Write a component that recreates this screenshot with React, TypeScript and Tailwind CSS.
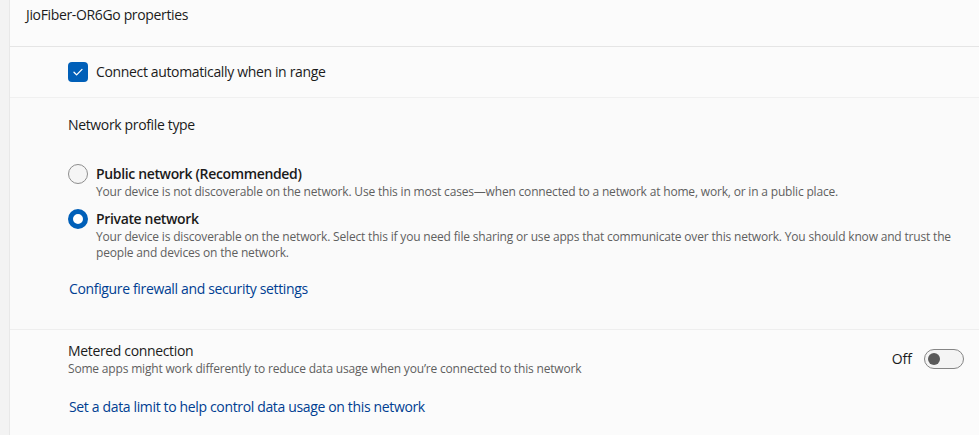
import React, { useState } from 'react';

const font = { fontFamily: '"Segoe UI", "Open Sans", "Liberation Sans", sans-serif' };

function Radio({ checked }: { checked: boolean }) {
  return checked ? (
    <span className="box-border block h-5 w-5 shrink-0 rounded-full border-[5px] border-[#005fb8] bg-white" />
  ) : (
    <span className="box-border block h-5 w-5 shrink-0 rounded-full border border-[#8d8d8d] bg-[#f5f5f5]" />
  );
}

export default function App() {
  const [auto, setAuto] = useState(true);
  const [profile, setProfile] = useState<'public' | 'private'>('private');
  const [metered, setMetered] = useState(false);

  return (
    <div className="flex h-[435px] w-[979px] overflow-hidden bg-[#f3f3f3] text-[#1b1b1b]" style={font}>
      <div className="w-[10px] shrink-0 border-r border-[#e8e8e8] bg-[#f3f3f3]" />
      <div className="flex flex-1 flex-col bg-[#fbfbfb]">
        <div className="h-[47px] shrink-0 border-b border-[#e5e5e5] pl-[16px] pt-[5px] text-[14px] leading-[20px] tracking-[-0.35px]">
          JioFiber-OR6Go properties
        </div>

        <div className="flex h-[51px] shrink-0 items-center border-b border-[#f0f0f0] pl-[58px]">
          <button className="flex items-center gap-2" onClick={() => setAuto(!auto)}>
            <span className="flex h-5 w-5 items-center justify-center rounded-[4px] bg-[#005fb8]">
              {auto && (
                <svg width="12" height="12" viewBox="0 0 12 12" fill="none">
                  <path d="M2 6.3l2.6 2.6L10 3.4" stroke="white" strokeWidth="1.3" strokeLinecap="round" strokeLinejoin="round" />
                </svg>
              )}
            </span>
            <span className="text-[14px] leading-[20px] tracking-[-0.35px]">Connect automatically when in range</span>
          </button>
        </div>

        <div className="h-[232px] shrink-0 border-b border-[#eeeeee] bg-[#fafafa] pl-[58px] pt-[17px]">
          <div className="text-[14px] leading-[20px] tracking-[-0.35px]">Network profile type</div>

          <div className="mt-[29px] flex cursor-pointer gap-2" onClick={() => setProfile('public')}>
            <Radio checked={profile === 'public'} />
            <div>
              <div className="text-[14px] font-semibold leading-[20px] tracking-[-0.35px]">Public network (Recommended)</div>
              <div className="text-[12px] leading-[16px] tracking-[-0.18px] text-[#5f5f5f]">
                Your device is not discoverable on the network. Use this in most cases—when connected to a network at home, work, or in a public place.
              </div>
            </div>
          </div>

          <div className="mt-[9px] flex cursor-pointer gap-2" onClick={() => setProfile('private')}>
            <Radio checked={profile === 'private'} />
            <div className="pr-[20px]">
              <div className="text-[14px] font-semibold leading-[20px] tracking-[-0.35px]">Private network</div>
              <div className="text-[12px] leading-[16px] tracking-[-0.18px] text-[#5f5f5f]">
                Your device is discoverable on the network. Select this if you need file sharing or use apps that communicate over this network. You should know and trust the people and devices on the network.
              </div>
            </div>
          </div>

          <a className="mt-[18px] block pl-[1px] text-[14px] leading-[20px] tracking-[-0.35px] text-[#003e92]" href="#">
            Configure firewall and security settings
          </a>
        </div>

        <div className="flex-1 pl-[58px] pr-[15px] pt-[11px]">
          <div className="flex items-center">
            <div className="flex-1">
              <div className="text-[14px] leading-[20px] tracking-[-0.35px]">Metered connection</div>
              <div className="text-[12px] leading-[16px] tracking-[-0.18px] text-[#5f5f5f]">
                Some apps might work differently to reduce data usage when you’re connected to this network
              </div>
            </div>
            <span className="mr-[12px] text-[14px] leading-[20px]">{metered ? 'On' : 'Off'}</span>
            <button
              className={
                metered
                  ? 'flex h-5 w-10 items-center justify-end rounded-full bg-[#005fb8] px-[4px]'
                  : 'flex h-5 w-10 items-center rounded-full border border-[#858585] bg-[#f4f4f4] px-[3px]'
              }
              onClick={() => setMetered(!metered)}
            >
              <span className={metered ? 'h-3 w-3 rounded-full bg-white' : 'h-3 w-3 rounded-full bg-[#5a5a5a]'} />
            </button>
          </div>
          <a className="mt-[20px] block pl-[1px] text-[14px] leading-[20px] tracking-[-0.35px] text-[#003e92]" href="#">
            Set a data limit to help control data usage on this network
          </a>
        </div>
      </div>
    </div>
  );
}
